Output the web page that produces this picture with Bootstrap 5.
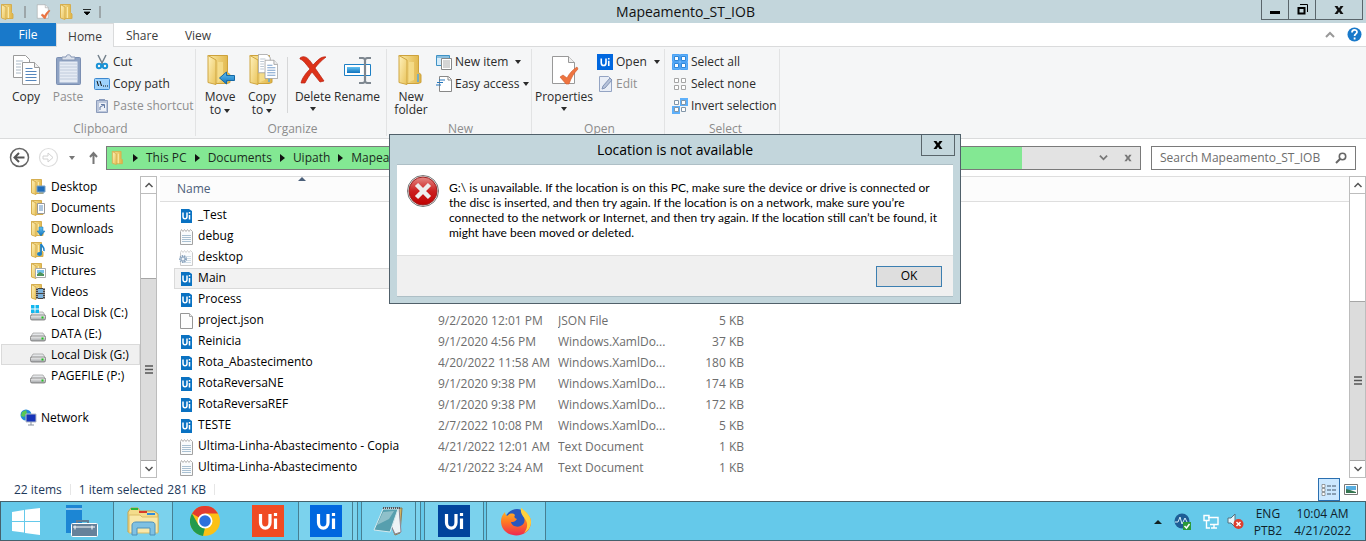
<!DOCTYPE html>
<html lang="en">
<head>
<meta charset="utf-8">
<meta name="viewport" content="width=device-width, initial-scale=1">
<title>Mapeamento_ST_IOB</title>
<link rel="stylesheet" href="https://cdn.jsdelivr.net/npm/bootstrap@5.3.0/dist/css/bootstrap.min.css">
<style>
body{font:12px/16px "Open Sans","Noto Sans",sans-serif;color:#000;background:#fff}
button,input{font:inherit;color:inherit;background:none;border:0;padding:0}
a{color:inherit;text-decoration:none}
.window-title{height:23px;background:#c3d6dc;font-size:14px;color:#111}
.quick{width:110px}
.win-buttons{height:20px;border:1px solid #5a656b;border-top:0;margin-right:3px}
.win-buttons button{width:27px;border-right:1px solid #5a656b}
.win-buttons button:last-child{width:46px;border:0}
.tab-row{height:24px;border-bottom:1px solid #dadbdc;color:#3c3c3c}
.tab-row button{width:56px;height:23px;padding-top:2px}
.tab-row .file-tab{background:#1979ca;color:#fff;padding-top:0}
.tab-row .home-tab{width:58px;height:24px;background:#f5f6f7;border:1px solid #dadbdc;border-bottom:0}
.ribbon{height:92px;background:#f5f6f7;border-bottom:1px solid #dadbdc;color:#2b2b2b}
.rgroup{border-right:1px solid #e2e3e4;margin:2px 0;flex:none}
.rgroup .tools{height:72px}
.rgroup .caption{color:#8c8c8c}
.big{display:flex;flex-direction:column;align-items:center;line-height:13px;padding-top:5px;white-space:nowrap}
.big svg{margin-bottom:4px;flex:none}
.small-tools{padding-top:2px}
.small-tools button{height:22px;display:flex;align-items:center;gap:3px;white-space:nowrap}
.off{color:#8f8f8f}
.caret{display:inline-block;border:3px solid transparent;border-top:4px solid currentColor;border-bottom:0;vertical-align:middle}
.w-clip{width:196px;padding-left:6px}.w-org{width:191px;padding-left:3px}.w-new{width:145px;padding-left:3px}.w-open{width:133px;padding-left:3px}.w-sel{width:115px;padding-left:7px}
.address-row{height:37px;padding:0 10px 0 9px}
.recent{margin:0 14px 0 10px}
.crumbs{height:24px;border:1px solid #7a7a7a;background:#e3e3e3;color:#1c2b1e}
.loading{background:#83e893;flex:none}
.crumbs .arrow{border:4px solid transparent;border-left:5px solid #111;border-right:0}
.search{height:24px;width:205px;border:1px solid #7a7a7a;margin-left:10px}
.search input{color:#6d6d6d;outline:0;min-width:0;flex:1}
.search input::placeholder{color:#6d6d6d;opacity:1}
.explorer{height:302px}
.tree{width:140px;flex:none}
.tree a{display:flex;align-items:center;height:21px;padding-left:28px;gap:5px;border:1px solid transparent;margin-left:1px;white-space:nowrap}
.tree a.picked{background:#f0f0f0;border-color:#dadada}
.tree a.net{padding-left:18px;gap:4px;margin-top:21px}
.scroller{width:17px;flex:none;border:1px solid #bdbdbd;display:flex;flex-direction:column}
.scroller button{height:16px;display:flex;align-items:center;justify-content:center;flex:none}
.scroller .thumb{background:#dcdcdc;border:solid #a6a6a6;border-width:1px 0;display:flex;align-items:center;justify-content:center}
.scroller .room{border-top:1px solid #bdbdbd}
.files{margin-left:3px;min-width:0}
.list-head{height:26px;background:#fcfcfc;border:solid #dedede;border-width:1px 0;color:#4c607a;padding-left:17px}
.file-table{width:580px;margin:3px 0 0 14px;table-layout:fixed;border-collapse:separate;border-spacing:0;color:#6d6d6d}
.file-table td{height:21px;padding:0;white-space:nowrap;overflow:hidden;border:solid transparent;border-width:1px 0}
.file-table td:first-child{color:#000;padding-left:4px;border-left-width:1px}
.file-table td:first-child svg{vertical-align:middle}
.file-table tr.picked td{background:#f2f2f2;border-color:#dadada}
.file-table td:last-child{text-align:right;padding-right:10px}
.status{height:23px;color:#1e395b;padding-left:14px}
.status .sep{border-right:1px solid #e6e6e6;height:11px}
.view-on{width:22px;height:23px;background:#cce8ff;border:1px solid #2a6fb0}
.taskbar{height:40px;background:#65c9ea;border:1px solid #45616c;color:#10222a}
.taskbar button{display:flex;align-items:center;justify-content:center;flex:none}
.w60{width:60px}.w55{width:55px}
.running{background:#7bd2ed;border:solid #477f92;border-width:0 1px}
.stack{border-right:1px solid #477f92;padding-right:4px;margin-right:3px;background:#7bd2ed}
.dialog-box{position:absolute;left:389px;top:134px;width:572px;height:170px;background:#c3d6dc;border:1px solid #50606a;color:#000}
.dialog-box .heading{height:29px;font-size:14px}
.dialog-box .close-x{position:absolute;right:5px;top:0;width:34px;height:21px;border:1px solid #5a656b;border-top:0}
.dialog-pane{margin:0 7px;border:solid #aebfc6;border-width:1px 0;height:133px;background:#fff}
.message{height:90px;padding:10px 10px 0;line-height:15px}
.message p{font-family:Lato,"Open Sans",sans-serif;margin:5px 0 0 10px;white-space:nowrap}
.dialog-foot{height:41px;background:#f0f0f0;border-top:1px solid #dfdfdf;padding-right:11px}
.ok{width:66px;height:21px;background:#dedede;border:1px solid #3c7fb1}
.tray{line-height:17px;text-align:center;padding:1px 14px 0 0}
.tray .gap-l{margin-left:12px}
.tray .gap-m{margin-left:10px}
</style>
</head>
<body>
<svg width="0" height="0" class="position-absolute" aria-hidden="true">
<defs>
<linearGradient id="gold" x1="0" x2="1"><stop offset="0" stop-color="#fbe9a4"/><stop offset="1" stop-color="#dfb344"/></linearGradient>
<linearGradient id="gold2" x1="0" x2="1" y2="1"><stop offset="0" stop-color="#fff2bd"/><stop offset="1" stop-color="#e9c35a"/></linearGradient>
<linearGradient id="grey" y2="1" x2="0"><stop offset="0" stop-color="#f4f4f4"/><stop offset="1" stop-color="#a0a3a6"/></linearGradient>
<linearGradient id="red" y2="1" x2="0"><stop offset="0" stop-color="#e58a86"/><stop offset=".5" stop-color="#cb1f1f"/><stop offset="1" stop-color="#c00000"/></linearGradient>
<linearGradient id="sky" y2="1" x2="0"><stop offset="0" stop-color="#62c1f2"/><stop offset="1" stop-color="#1173bd"/></linearGradient>
<linearGradient id="fox" y2="1" x2="0"><stop offset="0" stop-color="#ffc62b"/><stop offset=".5" stop-color="#ff7a22"/><stop offset="1" stop-color="#ee2950"/></linearGradient>
<symbol id="folder" viewBox="0 0 32 32"><path d="M4 1.500h19.500v17l2.500 2v8l-3 1H12z" fill="url(#gold)" stroke="#cda23c"/><path d="M4 1.500l8 4.500v24.500l-8-2z" fill="url(#gold2)" stroke="#cfa641"/><path d="M14 8h5v18l-5 2z" fill="#f8e294" opacity=".7"/><path d="M23 20v8" stroke="#56a9e0" stroke-width="1.500"/></symbol>
<symbol id="mini" viewBox="0 0 16 16"><path d="M1.500.500h10v8l1.500 1.500v4.500H6z" fill="url(#gold)" stroke="#d5ae50"/><path d="M1.500.500L6 3v12.500L1.500 14z" fill="url(#gold2)" stroke="#d5ae50"/><path d="M8.500 3v11" stroke="#fae9a7"/></symbol>
<symbol id="page" viewBox="0 0 16 16"><path d="M1.500.500h9l3 3v12h-12z" fill="#fdfdfd" stroke="#969696"/><path d="M10.500.500v3h3" fill="#eee" stroke="#aaa"/></symbol>
<symbol id="note" viewBox="0 0 16 16"><path d="M1.500 2.500V15.500H13.500V2.500" fill="#f9fbfc" stroke="#a2a2a2"/><path d="M3 6.500h9M3 8.500h9M3 10.500h9M3 12.500h9" stroke="#a9c0d2"/><path d="M1.500 2.500l1-2 1.500 2 1.500-2 1.500 2 1.500-2 1.500 2 1.500-2 2 2" fill="none" stroke="#aaa" stroke-width=".9"/></symbol>
<symbol id="cog" viewBox="0 0 16 16"><g opacity=".55"><use href="#note"/></g><circle cx="4" cy="9" r="3" fill="#eef3f8" stroke="#8aa3bd" stroke-width="2" stroke-dasharray="1.300 .8"/><circle cx="4" cy="9" r="2" fill="none" stroke="#8aa3bd"/></symbol>
<symbol id="uifile" viewBox="0 0 16 16"><path d="M2 1h8l3 2v12H2z" fill="#0a72c2"/><path d="M4 4.500v4c0 3 4 3 4 0v-4M10.500 7v4.500M10.500 4v1.500" fill="none" stroke="#fff" stroke-width="1.500"/></symbol>
<symbol id="ui" viewBox="0 0 32 32"><path fill="currentColor" d="M0 0h32v32H0z"/><path d="M8.500 9v8.500c0 7.500 9.500 7.500 9.500 0V9M23.500 13.500V24M23.500 8v3" fill="none" stroke="#fff" stroke-width="3.200"/></symbol>
<symbol id="copydoc" viewBox="0 0 32 32"><g fill="#fff" stroke="#9a9a9a"><path d="M3.500 1.500h12l4 4v18h-16z"/><path d="M12.500 8.500h12l5 5v17h-17z"/><path d="M24.500 8.500v5h5" fill="#eee"/></g><path d="M6 7h7M6 10h5M6 13h5M6 16h5M6 19h5" stroke="#a9b8c6"/><path d="M15.500 14.500h7M15.500 17.500h11M15.500 20.500h11M15.500 23.500h11M15.500 26.500h11" stroke="#5787bd"/></symbol>
<symbol id="drive" viewBox="0 0 16 16"><path d="M3 7h10l2.500 4H.500z" fill="#e4e6e8" stroke="#9b9b9b" stroke-width=".7"/><rect x=".500" y="10" width="15" height="5" rx="1.500" fill="url(#grey)" stroke="#777" stroke-width=".8"/><path d="M11.500 12.500h2" stroke="#1fc41f" stroke-width="2"/></symbol>
<symbol id="props" viewBox="0 0 32 32"><path d="M4.500 2.500h16l6 6v21h-22z" fill="#fff" stroke="#999"/><path d="M20.500 2.500v6h6" fill="#eee" stroke="#999"/><path d="M12 23l3-2 4 3c2-4 5-8 10-11l1 2c-4 4-7 9-9 15h-3z" fill="#ee7440" stroke="#cd592c" stroke-width=".6"/></symbol>
<symbol id="sq4" viewBox="0 0 16 16"><g fill="#fff" stroke="currentColor"><path d="M2.500 2.500h4v4h-4zM9.500 2.500h4v4h-4zM2.500 9.500h4v4h-4zM9.500 9.500h4v4h-4z"/></g></symbol>
<symbol id="x" viewBox="0 0 10 10"><path d="M.5 1h3L5 3.300 6.500 1h3L6.600 5l2.900 4h-3L5 6.700 3.500 9h-3L3.400 5z" fill="currentColor"/></symbol>
<symbol id="up" viewBox="0 0 10 10"><path d="M1.500 7L5 3.500 8.500 7" fill="none" stroke="#555" stroke-width="1.500"/></symbol>
<symbol id="down" viewBox="0 0 10 10"><path d="M1.500 3L5 6.500 8.500 3" fill="none" stroke="#555" stroke-width="1.500"/></symbol>
</defs></svg>

<div class="d-flex flex-column min-vh-100">
<header class="window-title d-flex justify-content-between">
 <div class="quick d-flex align-items-center gap-2 flex-shrink-0">
  <svg width="16" height="18"><use href="#mini"/></svg><svg width="3" height="12"><path d="M1 0v12" stroke="#777"/></svg>
  <svg width="16" height="17"><use href="#props"/></svg><svg width="16" height="16"><use href="#mini"/></svg>
  <svg width="8" height="8"><path d="M0 1.500h8M1 4h6L4 7z" stroke="#000" stroke-width=".8"/></svg><svg width="3" height="12"><path d="M1 0v12" stroke="#777"/></svg>
 </div>
 <div class="align-self-center">Mapeamento_ST_IOB</div>
 <div class="win-buttons d-flex">
  <button aria-label="Minimize"><svg width="10" height="8" class="d-block m-auto"><path d="M0 6.500h10" stroke="#000" stroke-width="3"/></svg></button>
  <button aria-label="Restore"><svg width="11" height="11" class="d-block m-auto"><path d="M1.500 4h6v5.500h-6z" fill="none" stroke="#000" stroke-width="2"/><path d="M3 .5h7.500V8" fill="none" stroke="#000"/></svg></button>
  <button aria-label="Close"><svg width="10" height="10" class="d-block m-auto"><use href="#x"/></svg></button>
 </div>
</header>
<nav class="tab-row d-flex">
 <button class="file-tab">File</button><button class="home-tab">Home</button><button>Share</button><button>View</button>
 <div class="ms-auto me-1 d-flex align-items-center gap-2"><svg width="10" height="10" class="me-1"><path d="M1 7l4-4 4 4" fill="none" stroke="#999" stroke-width="2"/></svg>
 <svg width="15" height="15" viewBox="0 0 15 15"><circle cx="7.500" cy="7.500" r="7" fill="#1979ca"/><path d="M5 5.500c0-3.500 5-3.300 5-.5 0 2-2.400 1.800-2.400 4M7.600 10.500v2" fill="none" stroke="#fff" stroke-width="1.800"/></svg></div>
</nav>
<section class="ribbon d-flex">
 <div class="rgroup w-clip"><div class="tools d-flex">
  <button class="big" style="width:40px"><svg width="32" height="32"><use href="#copydoc"/></svg>Copy</button>
  <button class="big off" style="width:44px"><svg width="32" height="32" viewBox="0 0 32 32"><rect x="4.500" y="3.500" width="24" height="27" rx="1" fill="#8fa3c4" stroke="#7b8fb2"/><path d="M7.500 7.500h18v21h-18z" fill="#e5ebf4"/><path d="M8 10h17M8 13h17M8 16h17M8 19h17M8 22h17M8 25h17" stroke="#c0cbdc"/><path d="M10 6V3h4c0-3 5-3 5 0h4v3z" fill="#dce2ec" stroke="#8797b4"/></svg>Paste</button>
  <div class="small-tools ps-1">
   <button><svg width="16" height="16"><path d="M4 1l5 10M12 1L7 11" stroke="#75828d" stroke-width="1.500"/><circle cx="5" cy="12" r="2.200" fill="none" stroke="#1b93d6" stroke-width="2"/><circle cx="11" cy="12" r="2.200" fill="none" stroke="#1b93d6" stroke-width="2"/></svg>Cut</button>
   <button><svg width="16" height="16"><rect x=".5" y="2.500" width="15" height="11" rx="1" fill="#9ed2fb" stroke="#3d88cf"/><path d="M3 5l1.500 5M6 5l1.500 5M9 10h1M11 10h1M13 10h1" stroke="#111"/></svg>Copy path</button>
   <button class="off"><svg width="16" height="16"><path d="M2.500 2.500h11v12h-11z" fill="#bcc7dc" stroke="#8c9cbb"/><path d="M5 5h7v8H5z" fill="#eef1f7"/><path d="M5 1h6v2H5z" fill="#8c9cbb"/><path d="M6 12V9l4-2M7 6.500h3.500V10" fill="none" stroke="#627aa4"/></svg>Paste shortcut</button>
  </div></div><div class="caption text-center">Clipboard</div></div>
 <div class="rgroup w-org"><div class="tools d-flex">
  <button class="big" style="width:42px"><svg width="32" height="32"><use href="#folder"/><path d="M15.500 24l7-6v3.500h8v5h-8V30z" fill="url(#sky)" stroke="#1668a4"/></svg><span>Move<br>to <i class="caret"></i></span></button>
  <button class="big" style="width:42px"><svg width="32" height="32"><use href="#folder"/><svg x="12" y="0" width="20" height="25" viewBox="3 1 27 30" preserveAspectRatio="none"><use href="#copydoc" width="32" height="32"/></svg></svg><span>Copy<br>to <i class="caret"></i></span></button>
  <div class="vr mx-1 my-2" style="height:56px;opacity:.15"></div>
  <button class="big" style="width:42px"><svg width="32" height="32"><path d="M3 4c4-3 8-1 13 7 4-4 8-9 13-8-5 4-8 7-11 11l9 13-4 1-8-10c-3 4-5 7-7 11H4c1-5 5-10 9-14C9 10 6 6 3 5z" fill="#dd3219" stroke="#b9200f" stroke-width=".7"/></svg>Delete<i class="caret mt-1"></i></button>
  <button class="big" style="width:46px"><svg width="32" height="32"><path d="M3.500 10.500h26v11h-26z" fill="#fff" stroke="#1d7fc4"/><path d="M6 13h13v6H6z" fill="url(#sky)"/><path d="M18 4h4l2 1 2-1h4M18 29h4l2-1 2 1h4M24 5v23" fill="none" stroke="#7e8790" stroke-width="2.200"/></svg>Rename</button>
 </div><div class="caption text-center">Organize</div></div>
 <div class="rgroup w-new"><div class="tools d-flex">
  <button class="big" style="width:42px"><svg width="32" height="32"><use href="#folder"/></svg><span>New<br>folder</span></button>
  <div class="small-tools ps-1">
   <button><svg width="16" height="16"><path d="M.5 1.500h13v10H.5z" fill="#d5ecfa" stroke="#3f92c5"/><path d="M1 3h12" stroke="#3f92c5"/><path d="M5.500 4.500h10v11h-10z" fill="#fff" stroke="#888"/><path d="M7 7h7M7 9h7M7 11h7M7 13h7" stroke="#aaa"/></svg>New item <i class="caret ms-1"></i></button>
   <button><svg width="16" height="16"><path d="M3.500.5h9l3 3v12h-12z" fill="#fff" stroke="#888"/><path d="M12 1v3h3" fill="none" stroke="#888"/><path d="M3 4h6M1 6.500h6M0 9h5" stroke="#2477bd"/></svg>Easy access <i class="caret"></i></button>
  </div></div><div class="caption text-center">New</div></div>
 <div class="rgroup w-open"><div class="tools d-flex">
  <button class="big" style="width:58px"><svg width="32" height="32"><use href="#props"/></svg>Properties<i class="caret mt-1"></i></button>
  <div class="small-tools ps-1">
   <button><svg width="16" height="16" color="#0067df"><use href="#ui"/></svg>Open <i class="caret ms-1"></i></button>
   <button class="off"><svg width="16" height="16"><path d="M2.500.5h9l3 3v12h-12z" fill="#e9eef7" stroke="#94a4c3"/><path d="M5 13l1-3 7-8 2 2-7 8z" fill="#b5c2da" stroke="#8294b7"/></svg>Edit</button>
  </div></div><div class="caption text-center">Open</div></div>
 <div class="rgroup w-sel"><div class="tools small-tools">
   <button><svg width="16" height="16"><path d="M.5.5h7v7h-7zM8.500.5h7v7h-7zM.5 8.500h7v7h-7zM8.500 8.500h7v7h-7z" fill="#5eb0fa" stroke="#4da3f5"/><g color="#2f86d8"><use href="#sq4"/></g></svg>Select all</button>
   <button><svg width="16" height="16" color="#a5a5a5"><use href="#sq4"/></svg>Select none</button>
   <button><svg width="16" height="16"><path d="M8 0h8v8H8zM0 8h8v8H0z" fill="#5eb0fa"/><g color="#8296a8"><use href="#sq4"/></g></svg>Invert selection</button>
  </div><div class="caption text-center">Select</div></div>
</section>
<div class="address-row d-flex align-items-center">
 <button aria-label="Back"><svg width="21" height="21" class="d-block"><circle cx="10.500" cy="10.500" r="9" fill="none" stroke="#666" stroke-width="1.500"/><path d="M15.500 10.500H6M10 6l-4.500 4.500L10 15" fill="none" stroke="#555" stroke-width="2"/></svg></button>
 <button class="ms-2" aria-label="Forward"><svg width="21" height="21" class="d-block"><circle cx="10.500" cy="10.500" r="9" fill="none" stroke="#ddd" stroke-width="1.200"/><path d="M5 9h5V6l5 4.500-5 4.500v-3H5z" fill="none" stroke="#d2d2d2"/></svg></button>
 <button class="recent" aria-label="Recent locations"><i class="caret" style="color:#777"></i></button>
 <button aria-label="Up"><svg width="9" height="13" class="d-block"><path d="M4.500 13V2M1 6l3.500-4L8 6" fill="none" stroke="#777" stroke-width="2"/></svg></button>
 <div class="crumbs d-flex flex-grow-1 ms-2">
  <div class="loading d-flex align-items-center ps-1" style="width:88.600%"><svg width="14" height="16"><use href="#mini"/></svg><i class="arrow ms-2 me-2"></i><a href="#">This PC</a><i class="arrow ms-2 me-2"></i><a href="#">Documents</a><i class="arrow ms-2 me-2"></i><a href="#">Uipath</a><i class="arrow ms-2 me-2"></i><a href="#">Mapeamento_ST_IOB</a></div>
  <div class="ms-auto d-flex align-items-center gap-3 pe-2"><svg width="9" height="9" viewBox="0 0 10 10"><path d="M1 3l4 4 4-4" fill="none" stroke="#777" stroke-width="2"/></svg><svg width="8" height="8" color="#777" viewBox="0 0 10 10"><use href="#x"/></svg></div>
 </div>
 <label class="search d-flex align-items-center ps-2 pe-2"><input type="search" aria-label="Search Mapeamento_ST_IOB" placeholder="Search Mapeamento_ST_IOB"><svg width="12" height="12" class="flex-shrink-0"><circle cx="7.500" cy="4.500" r="3.200" fill="none" stroke="#666" stroke-width="1.600"/><path d="M5 7L1 11" stroke="#666" stroke-width="2"/></svg></label>
</div>
<main class="explorer d-flex">
 <nav class="tree">
  <a href="#"><svg width="16" height="16"><use href="#mini"/><path d="M7 7h8v6H7zM9 14h5" fill="#1f6cba" stroke="#79a0c5"/></svg>Desktop</a>
  <a href="#"><svg width="16" height="16"><use href="#mini"/><path d="M7.500 3.500h7v10h-7z" fill="#fff" stroke="#999"/><path d="M9 6h4M9 8h4M9 10h4" stroke="#5c8fc1"/></svg>Documents</a>
  <a href="#"><svg width="16" height="16"><use href="#mini"/><path d="M9 6h4v4h2l-4 5-4-5h2z" fill="url(#sky)" stroke="#1370b0" stroke-width=".5"/></svg>Downloads</a>
  <a href="#"><svg width="16" height="16"><use href="#mini"/><path d="M11 2v10M11 2c1 3 4 3 3 7" fill="none" stroke="#1b81c9" stroke-width="1.700"/><ellipse cx="9.500" cy="12" rx="2.500" ry="2" fill="#1b81c9"/></svg>Music</a>
  <a href="#"><svg width="16" height="16"><use href="#mini"/><path d="M5.500 5.500h10v9h-10z" fill="#fff" stroke="#aaa"/><path d="M7 7h7v3H7z" fill="#75c0e9"/><path d="M7 13v-2l3-2 4 2v2z" fill="#4f935c"/></svg>Pictures</a>
  <a href="#"><svg width="16" height="16"><use href="#mini"/><path d="M6 4h9v11H6z" fill="#444"/><path d="M8 5h5v4H8zM8 10h5v4H8z" fill="#7cb2dc"/><path d="M7 4v11M14 4v11" stroke="#eee" stroke-dasharray="1 1"/></svg>Videos</a>
  <a href="#"><svg width="16" height="16"><use href="#drive"/><path d="M1 0h3.500v3.500H1zM5.500 0H9v3.500H5.500zM1 4.500h3.500V8H1zM5.500 4.500H9V8H5.500z" fill="#13b7ef"/></svg>Local Disk (C:)</a>
  <a href="#"><svg width="16" height="16"><use href="#drive"/></svg>DATA (E:)</a>
  <a href="#" class="picked"><svg width="16" height="16"><use href="#drive"/></svg>Local Disk (G:)</a>
  <a href="#"><svg width="16" height="16"><use href="#drive"/></svg>PAGEFILE (P:)</a>
  <a href="#" class="net"><svg width="17" height="17"><circle cx="6" cy="6" r="5.500" fill="#2289d8"/><path d="M2 3l4-2 1 3-3 4-3-1zM7 8l3-3v4z" fill="#59c853"/><path d="M6 5h10v8H6z" fill="#1733b8" stroke="#b5bcc6"/><path d="M11 13v3M8 16h6" stroke="#8791a0"/></svg>Network</a>
 </nav>
 <div class="scroller"><button aria-label="Scroll up"><svg width="10" height="10"><use href="#up"/></svg></button><div class="room" style="flex:85"></div><div class="thumb" style="flex:183"><svg width="8" height="9"><path d="M0 1h8M0 4.500h8M0 8h8" stroke="#555" stroke-width="1.600"/></svg></div><button aria-label="Scroll down"><svg width="10" height="10"><use href="#down"/></svg></button></div>
 <section class="files flex-grow-1">
  <div class="list-head d-flex align-items-center"><span>Name</span><svg width="8" height="4" class="align-self-start" style="margin-left:87px"><path d="M0 4l4-4 4 4z" fill="#4c607a"/></svg></div>
  <table class="file-table"><colgroup><col style="width:264px"><col style="width:120px"><col style="width:112px"><col></colgroup><tbody>
  <tr><td><svg width="16" height="16"><use href="#uifile"/></svg> _Test</td><td></td><td></td><td></td></tr>
  <tr><td><svg width="16" height="16"><use href="#note"/></svg> debug</td><td></td><td></td><td></td></tr>
  <tr><td><svg width="16" height="16"><use href="#cog"/></svg> desktop</td><td></td><td></td><td></td></tr>
  <tr class="picked"><td><svg width="16" height="16"><use href="#uifile"/></svg> Main</td><td></td><td></td><td></td></tr>
  <tr><td><svg width="16" height="16"><use href="#uifile"/></svg> Process</td><td></td><td></td><td></td></tr>
  <tr><td><svg width="16" height="16"><use href="#page"/></svg> project.json</td><td>9/2/2020 12:01 PM</td><td>JSON File</td><td>5 KB</td></tr>
  <tr><td><svg width="16" height="16"><use href="#uifile"/></svg> Reinicia</td><td>9/1/2020 4:56 PM</td><td>Windows.XamlDo...</td><td>37 KB</td></tr>
  <tr><td><svg width="16" height="16"><use href="#uifile"/></svg> Rota_Abastecimento</td><td>4/20/2022 11:58 AM</td><td>Windows.XamlDo...</td><td>180 KB</td></tr>
  <tr><td><svg width="16" height="16"><use href="#uifile"/></svg> RotaReversaNE</td><td>9/1/2020 9:38 PM</td><td>Windows.XamlDo...</td><td>174 KB</td></tr>
  <tr><td><svg width="16" height="16"><use href="#uifile"/></svg> RotaReversaREF</td><td>9/1/2020 9:38 PM</td><td>Windows.XamlDo...</td><td>172 KB</td></tr>
  <tr><td><svg width="16" height="16"><use href="#uifile"/></svg> TESTE</td><td>2/7/2022 10:08 PM</td><td>Windows.XamlDo...</td><td>5 KB</td></tr>
  <tr><td><svg width="16" height="16"><use href="#note"/></svg> Ultima-Linha-Abastecimento - Copia</td><td>4/21/2022 12:01 AM</td><td>Text Document</td><td>1 KB</td></tr>
  <tr><td><svg width="16" height="16"><use href="#note"/></svg> Ultima-Linha-Abastecimento</td><td>4/21/2022 3:24 AM</td><td>Text Document</td><td>1 KB</td></tr>
  </tbody></table>
 </section>
 <div class="scroller"><button aria-label="Scroll up"><svg width="10" height="10"><use href="#up"/></svg></button><div class="room" style="flex:108"></div><div class="thumb" style="flex:160"><svg width="8" height="9"><path d="M0 1h8M0 4.500h8M0 8h8" stroke="#555" stroke-width="1.600"/></svg></div><button aria-label="Scroll down"><svg width="10" height="10"><use href="#down"/></svg></button></div>
</main>
<div class="status d-flex align-items-center">
 <span>22 items</span><i class="sep ms-2"></i><span class="ms-2">1 item selected</span><span class="ms-1">281 KB</span><i class="sep ms-2"></i>
 <button class="view-on ms-auto" aria-label="Details"><svg width="16" height="13" class="d-block m-auto"><path d="M1 1.500h3v3H1zM1 5.500h3v3H1zM1 9.500h3v3H1z" fill="#fff" stroke="#777" stroke-width=".7"/><path d="M6 3h4M11 3h4M6 7h4M11 7h4M6 11h4M11 11h4" stroke="#456"/></svg></button>
 <button class="ms-1 me-2" aria-label="Thumbnails"><svg width="14" height="11" class="d-block"><path d="M.5.5h13v10H.5z" fill="#fff" stroke="#777"/><path d="M2 2h10v4H2z" fill="#58aee0"/><path d="M2 5l4 1 6 2v1H2z" fill="#357550"/></svg></button>
</div>
<footer class="taskbar d-flex">
 <button style="width:50px" aria-label="Start"><svg width="28" height="27" viewBox="0 0 28 27"><path d="M0 4l12-2v11H0zM13 1.800L28 0v13H13zM0 14h12v10.500L0 23zM13 14h15v13l-15-2z" fill="#fff"/></svg></button>
 <button style="width:62px" aria-label="Server Manager"><svg width="32" height="32"><path d="M0 0h16v28H0z" fill="#1c86d4"/><path d="M0 4h16" stroke="#fff"/><path d="M11 19v-3h11v3" fill="none" stroke="#5f7d96" stroke-width="2"/><rect x="5.500" y="18.500" width="26" height="13" rx="1" fill="#66829b" stroke="#fff"/><path d="M7 22h22M9 20.500v4M26 20.500v4" stroke="#fff"/></svg></button>
 <button class="running w60" aria-label="File Explorer"><svg width="33" height="31"><path d="M1 6l3-4h7l2 3h14l4 3v18H1z" fill="#f3dc8b" stroke="#c9a24a"/><path d="M4 3h7" stroke="#2ab53b" stroke-width="2"/><path d="M12 6h8" stroke="#d83c28" stroke-width="2"/><path d="M20 8h8" stroke="#2e8cdc" stroke-width="2"/><path d="M2 9h11l2 2h16v16H2z" fill="#f9e8a9" stroke="#dbbd67"/><path d="M5 29V19c0-2 2-3 4-3h15c3 0 4 1 4 3v10h-5v-7H10v7z" fill="#7fc1e3" stroke="#4f91bb"/></svg></button>
 <button style="width:64px" aria-label="Chrome"><svg width="30" height="30"><circle cx="15" cy="15" r="15" fill="#fbc116"/><path d="M15 15L2 7.500A15 15 0 0 1 28 7.500H15z" fill="#e33b2e"/><path d="M2 7.500L8.500 19 15 21.700 13 30A15 15 0 0 1 2 7.500" fill="#229a4c"/><circle cx="15" cy="15" r="7.500" fill="#fff"/><circle cx="15" cy="15" r="5.800" fill="#2c70dd"/></svg></button>
 <button style="width:61px;color:#f04b23" aria-label="UiPath"><svg width="32" height="32"><use href="#ui"/></svg></button>
 <div class="d-flex stack"><button class="running w55" aria-label="UiPath Studio" style="color:#0067df"><svg width="32" height="32"><use href="#ui"/></svg></button></div>
 <div class="d-flex stack"><button class="running w55" aria-label="Notepad"><svg width="32" height="32"><path d="M12 4l17-1-2 25-5 2z" fill="#d5b55e" stroke="#8b7950"/><path d="M10 3h16l2 24-6 2z" fill="#edf3f5" stroke="#889"/><path d="M10 4h15l-8 23L1 25z" fill="#579fae" stroke="#d4e9ed"/><path d="M10 7l-6 13 12-6 5-8z" fill="#a6ced5" opacity=".7"/><path d="M10 3h17" stroke="#555" stroke-width="2" stroke-dasharray="1 1"/></svg></button></div>
 <button class="running w60" aria-label="UiPath Robot" style="color:#00439c"><svg width="32" height="32"><use href="#ui"/></svg></button>
 <button class="running w60" style="margin-left:2px" aria-label="Firefox"><svg width="30" height="30"><circle cx="16" cy="15" r="12" fill="#2857bd"/><path d="M4 6c0 2 1 3 2 4 3-3 6-3 8-1-1 2-1 3 2 4-2 3-4 3-6 3 1 5 9 7 13 1 2-6-2-8-3-15 5 4 10 8 10 14 0 18-30 18-30-1 0-4 2-7 4-9z" fill="url(#fox)"/><path d="M20 2c5 4 10 8 10 14 0 5-3 9-7 11 4-5 4-10 1-14-2-3-5-6-4-11z" fill="#ffd13d"/></svg></button>
 <div class="ms-auto d-flex align-items-center tray">
  <svg width="8" height="5"><path d="M0 5l4-4 4 4z" fill="#122"/></svg>
  <svg width="17" height="17" class="gap-l"><circle cx="8" cy="8" r="7.500" fill="#1e5d96"/><path d="M1 9h3l2-5 2 7 3-6 2 4" fill="none" stroke="#d5effa"/><path d="M9 9h8v8H9z" fill="#2c9a39"/><path d="M10.500 13l2 2 3-4" fill="none" stroke="#fff" stroke-width="1.500"/></svg>
  <svg width="16" height="15" class="gap-l"><path d="M5 3.500h10v7H7M11 11v3M8 14h6M1 1.500h5v5H1zM3.500 7v7H7" fill="none" stroke="#fff" stroke-width="1.400"/></svg>
  <svg width="17" height="17" class="ms-2"><path d="M1 5h3l4-4v13l-4-4H1z" fill="#e8f7fc" stroke="#54717e"/><circle cx="11.500" cy="11" r="5" fill="#dc3e2f"/><path d="M9.500 9l4 4M13.500 9l-4 4" stroke="#fff" stroke-width="1.500"/></svg>
  <div class="gap-m">ENG<br>PTB2</div><div class="gap-l">10:04 AM<br>4/21/2022</div>
 </div>
</footer>
</div>

<div class="dialog-box" role="dialog" aria-label="Location is not available">
 <div class="heading d-flex align-items-center justify-content-center">Location is not available</div>
 <button class="close-x" aria-label="Close"><svg width="10" height="10" class="d-block m-auto"><use href="#x"/></svg></button>
 <div class="dialog-pane">
  <div class="message d-flex align-items-start"><svg width="32" height="32" class="flex-shrink-0"><circle cx="16" cy="16" r="15.500" fill="#eee" stroke="#777"/><circle cx="16" cy="16" r="14" fill="url(#red)" stroke="#9c2222"/><path d="M9.500 9.500l13 13M22.500 9.500l-13 13" stroke="#eee" stroke-width="4.500"/></svg>
  <p>G:\ is unavailable. If the location is on this PC, make sure the device or drive is connected or<br>the disc is inserted, and then try again. If the location is on a network, make sure you’re<br>connected to the network or Internet, and then try again. If the location still can’t be found, it<br>might have been moved or deleted.</p></div>
  <div class="dialog-foot d-flex align-items-center justify-content-end"><button class="ok">OK</button></div>
 </div>
</div>
<script src="https://cdn.jsdelivr.net/npm/bootstrap@5.3.0/dist/js/bootstrap.bundle.min.js"></script>
</body>
</html>
